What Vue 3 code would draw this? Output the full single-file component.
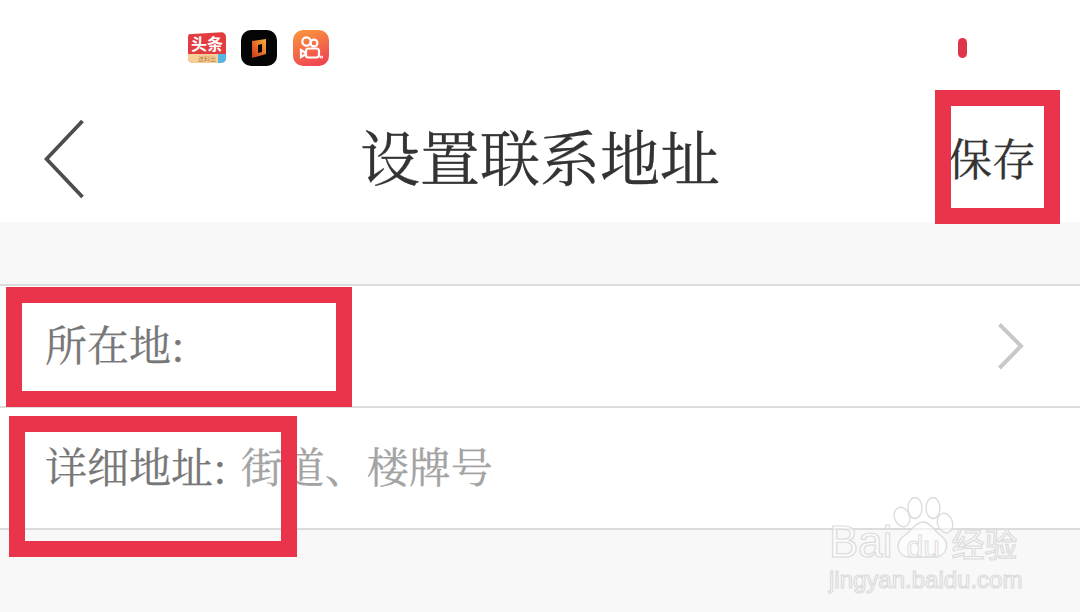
<script setup>
const rows = [
  { label: '所在地:', hint: '', arrow: true },
  { label: '详细地址:', hint: '街道、楼牌号', arrow: false }
]
</script>

<template>
  <div class="page">
    <div class="status">
      <div class="apps">
        <div class="app toutiao">
          <span class="tt-main">头条</span>
          <span class="tt-sub">送料出<i class="tt-corner"></i></span>
        </div>
        <div class="app black">
          <svg width="36" height="36" viewBox="0 0 36 36">
            <defs>
              <linearGradient id="frame" x1="0" y1="1" x2="1" y2="0">
                <stop offset="0" stop-color="#c8361c" />
                <stop offset="0.5" stop-color="#e8702a" />
                <stop offset="1" stop-color="#f4b23e" />
              </linearGradient>
            </defs>
            <path d="M11 11 L25 9 V24 L11 28 Z M17 15 V23 L21 22 V14 Z" fill="url(#frame)" fill-rule="evenodd" />
          </svg>
        </div>
        <div class="app kuai">
          <svg width="36" height="36" viewBox="0 0 36 36" fill="none" stroke="#fff" stroke-width="2.200">
            <circle cx="13.500" cy="11.500" r="4.200" />
            <circle cx="21" cy="13" r="3.400" />
            <rect x="13" y="18.500" width="13" height="9" rx="2.500" />
            <path d="M13 23 L8 20 V27 L13 24" />
            <circle cx="28.500" cy="27" r="0.500" />
          </svg>
        </div>
      </div>
      <span class="pill"></span>
    </div>

    <header class="bar">
      <svg class="back" width="42" height="82" viewBox="0 0 42 82" fill="none" stroke="#4d4d4d" stroke-width="3.800">
        <path d="M38.500 2 L2.500 40 L38.500 78" />
      </svg>
      <h1 class="title">设置联系地址</h1>
      <span class="save">保存</span>
    </header>

    <section class="list">
      <div v-for="r in rows" :key="r.label" class="row">
        <span class="label">{{ r.label }}</span>
        <span v-if="r.hint" class="hint">{{ r.hint }}</span>
        <svg v-if="r.arrow" class="next" width="28" height="48" viewBox="0 0 28 48" fill="none" stroke="#c8c8c8" stroke-width="4">
          <path d="M2.500 2.500 L24 24 L2.500 46" />
        </svg>
      </div>
    </section>

    <div class="mark box-save"></div>
    <div class="mark box-place"></div>
    <div class="mark box-detail"></div>

    <div class="wm">
      <svg class="paw" width="62" height="62" viewBox="0 0 62 62" fill="rgba(255,255,255,.55)" stroke="#dcdcdc" stroke-width="1.400">
        <ellipse cx="9" cy="20" rx="7.500" ry="10" transform="rotate(-20 9 20)" />
        <ellipse cx="22" cy="11" rx="7" ry="10.500" />
        <ellipse cx="40" cy="11" rx="7" ry="10.500" />
        <ellipse cx="52" cy="26" rx="7.500" ry="10" transform="rotate(-20 52 26)" />
        <path d="M30 25 C38 25 41 34 47 38 C58 45 54 60 42 60 L16 60 C4 60 1 45 12 38 C19 34 22 25 30 25 Z" />
      </svg>
      <div class="wm-top"><span class="wm-bai">Bai</span><span class="wm-du">du</span><span class="wm-cn">经验</span></div>
      <div class="wm-url">jingyan.baidu.com</div>
    </div>
  </div>
</template>

<style scoped>
.page {
  position: relative;
  width: 1080px;
  height: 612px;
  overflow: hidden;
  background: #f8f8f8;
  font-family: "Noto Serif CJK SC", "Liberation Serif", "Noto Sans CJK SC", serif;
}
.status {
  height: 92px;
  background: #fff;
  display: flex;
  align-items: center;
  justify-content: space-between;
  padding: 0 113px 0 188px;
  box-sizing: border-box;
}
.apps { display: flex; gap: 15px; margin-top: 4px; }
.app {
  width: 36px;
  height: 36px;
  border-radius: 10px;
  overflow: hidden;
  display: flex;
  flex-direction: column;
  align-items: center;
}
.toutiao {
  width: 38px;
  height: 31px;
  margin-top: 2px;
  border-radius: 5px;
  background: #e23b40;
  clip-path: polygon(0 7%, 100% 0, 100% 100%, 0 100%);
}
.tt-main {
  color: #fff;
  font: 700 16px/22px "Noto Sans CJK SC", sans-serif;
  white-space: nowrap;
}
.tt-sub {
  position: relative;
  width: 100%;
  height: 9px;
  background: #f6cf96;
  color: #b9803f;
  font: 6px/9px "Noto Sans CJK SC", sans-serif;
  text-align: center;
}
.tt-corner {
  position: absolute;
  right: 0;
  top: 0;
  width: 8px;
  height: 9px;
  background: #52b6e6;
}
.black { background: #050505; }
.kuai { margin-left: 1px; background: linear-gradient(160deg, #f9993a, #ef3c55); }
.pill {
  width: 9px;
  height: 20px;
  border-radius: 5px;
  background: #e0344b;
  margin-top: 4px;
}
.bar {
  height: 130px;
  background: #fff;
  display: flex;
  align-items: center;
  padding: 0 44px;
  box-sizing: border-box;
  position: relative;
}
.back { margin-top: 6px; }
.title {
  position: absolute;
  left: 360px;
  top: 23px;
  margin: 0;
  color: #333;
  font-size: 60px;
  font-weight: 400;
  line-height: 80px;
  white-space: nowrap;
  -webkit-text-stroke: 0.3px #333;
}
.save {
  margin-left: auto;
  color: #333;
  font-size: 44px;
  line-height: 60px;
  -webkit-text-stroke: 0.3px #333;
}
.list {
  margin-top: 62px;
  border-top: 2px solid #dcdcdc;
  background: #fff;
}
.row {
  height: 122px;
  box-sizing: border-box;
  border-bottom: 2px solid #dcdcdc;
  display: flex;
  align-items: center;
  padding: 0 55px 0 45px;
  font-size: 42px;
  color: #777;
  -webkit-text-stroke: 0.25px currentColor;
}
.label { margin-top: -7px; }
.hint { margin-left: 14px; margin-top: -7px; color: #a3a3a3; }
.next { margin-left: auto; }
.mark {
  position: absolute;
  box-sizing: border-box;
  border: 16px solid #e9344c;
}
.box-save { left: 935px; top: 90px; width: 125px; height: 134px; }
.box-place { left: 6px; top: 287px; width: 346px; height: 120px; }
.box-detail { left: 9px; top: 416px; width: 288px; height: 141px; }
.wm {
  position: absolute;
  left: 829px;
  top: 497px;
  width: 200px;
  color: rgba(255, 255, 255, 0.5);
  font-family: "Liberation Sans", "Noto Sans CJK SC", sans-serif;
  -webkit-text-stroke: 1.2px #dcdcdc;
}
.paw { position: absolute; left: 64px; top: 0; }
.wm-top {
  position: relative;
  display: flex;
  align-items: baseline;
  margin-top: 24px;
  height: 42px;
  font-size: 44px;
  line-height: 42px;
  white-space: nowrap;
}
.wm-du { font-size: 30px; margin-left: 14px; width: 46px; -webkit-text-stroke-width: 1px; }
.wm-cn { font-size: 33px; margin-left: -1px; }
.wm-url {
  margin-top: 4px;
  font-size: 24px;
  line-height: 26px;
  white-space: nowrap;
}
</style>
